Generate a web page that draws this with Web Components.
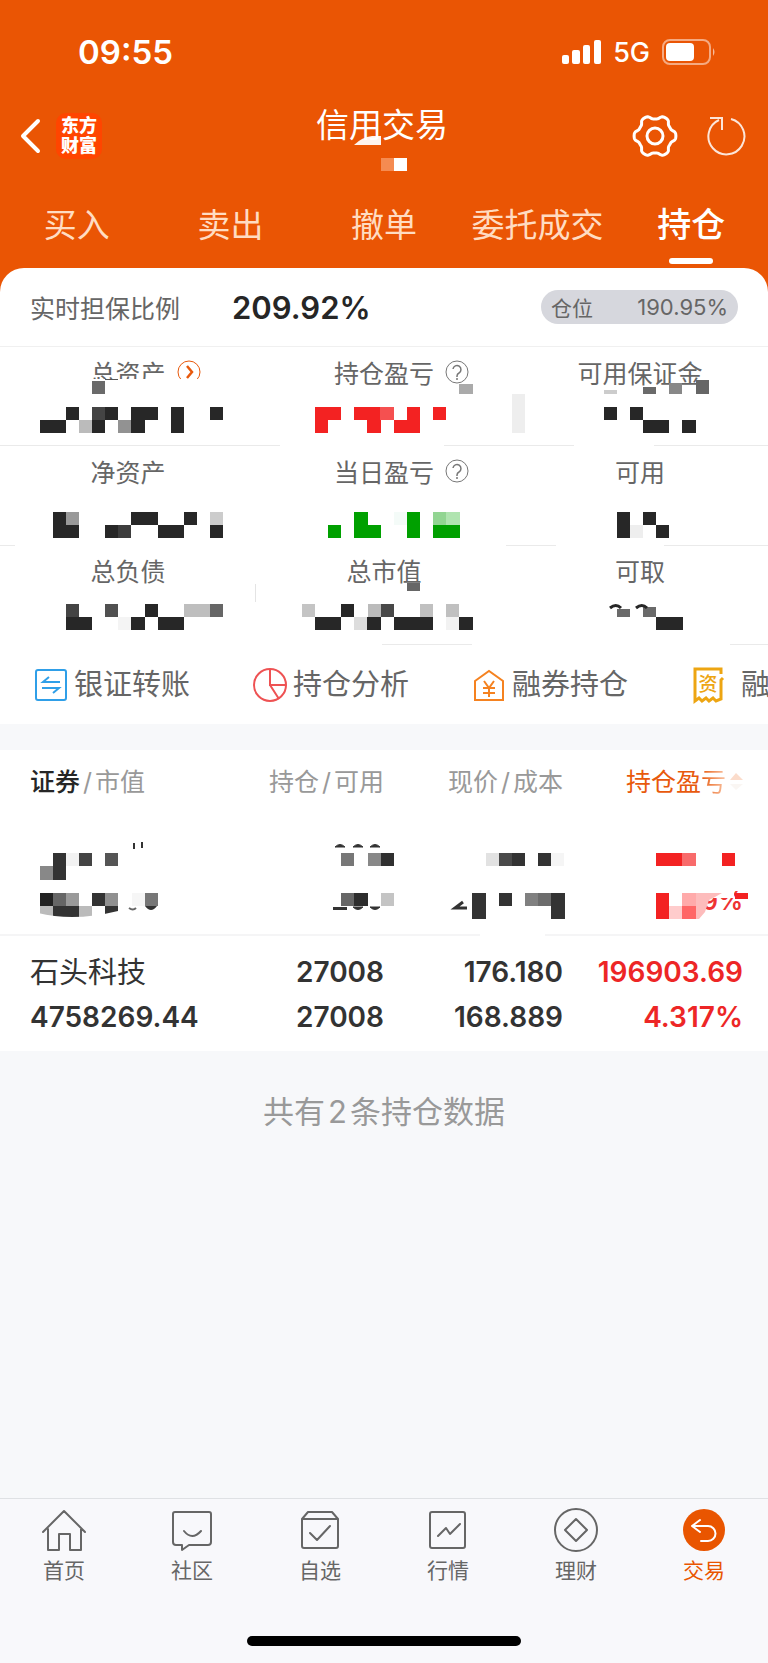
<!DOCTYPE html>
<html lang="zh-CN">
<head>
<meta charset="utf-8">
<meta name="viewport" content="width=device-width, initial-scale=1">
<title>信用交易</title>
<style>
body { margin: 0; background: #f7f8fa; font-family: Inter, "Noto Sans CJK SC", sans-serif; color: #666; }
</style>
</head>
<body>
<credit-app></credit-app>
<script>
const BASE = `:host,*{box-sizing:border-box} a{color:inherit;text-decoration:none} button{font:inherit;color:inherit;background:none;border:0;padding:0;margin:0;display:block;cursor:pointer} svg{display:block}`;
const define = (name, css, html) => customElements.define(name, class extends HTMLElement {
  constructor() {
    super();
    this.attachShadow({ mode: 'open' }).innerHTML = `<style>${BASE}${css}</style>${html}`;
  }
});

/* Redaction blocks: each entry is "x1 x2 y1 y2 colour". */
const D = '#272727', R = '#f32222', G = '#00a000';
const blocks = list => list.trim().split(/\s*;\s*/).filter(Boolean).map(s => {
  const [x1, x2, y1, y2, c] = s.split(' ');
  return `<rect x="${x1}" y="${y1}" width="${x2 - x1}" height="${y2 - y1}" fill="${c}"/>`;
}).join('');

define('status-bar', `
:host{display:flex;align-items:center;height:44px;margin-top:30px;padding:0 52px 0 78px;color:#fff}
time{font-size:33px;font-weight:600;margin-right:auto}
.net{font-size:27px;font-weight:500;margin:0 12px}`, `
<time>09:55</time>
<svg width="39" height="24" fill="#fff"><rect y="15" width="7" height="9" rx="2"/><rect x="10" y="10" width="8" height="14" rx="2"/><rect x="21" y="5" width="7" height="19" rx="2"/><rect x="32" width="7" height="24" rx="2"/></svg>
<span class="net">5G</span>
<svg width="54" height="26" fill="none"><rect x="1" y="1" width="47" height="24" rx="7" stroke="#fff" stroke-opacity=".5" stroke-width="2"/><rect x="4" y="4" width="28" height="18" rx="4" fill="#fff"/><path d="M51 9q3 4 0 8z" fill="#fff" fill-opacity=".6"/></svg>`);

const gear = (() => {
  let d = '';
  for (let i = 0; i < 120; i++) {
    const t = i * Math.PI / 60, r = 19 + 2 * Math.tanh(1.8 * Math.cos(6 * t));
    d += (i ? 'L' : 'M') + (23 + r * Math.cos(t)).toFixed(1) + ' ' + (23 + r * Math.sin(t)).toFixed(1);
  }
  return d + 'Z';
})();

define('nav-bar', `
:host{display:grid;grid-template-columns:1fr auto 1fr;align-items:center;height:124px;padding:0 22px 0 18px;color:#fff}
.left,.right{display:flex;align-items:center}
.left{gap:14px}.right{justify-content:flex-end;gap:28px}
.logo{width:46px;height:46px;border-radius:10px;background:#ff4500;font-size:18px;line-height:20px;font-weight:900;text-align:center;padding-top:3px}
.title{position:relative}
h1{margin:0 0 22px;font-size:33px;line-height:40px;font-weight:400}
.title svg{position:absolute;left:38px;top:29px}`, `
<div class="left"><button aria-label="返回"><svg width="24" height="36" fill="none" stroke="#fff" stroke-width="4" stroke-linecap="round" stroke-linejoin="round"><path d="M20 3 5 18 20 33"/></svg></button><div class="logo">东方<br>财富</div></div>
<div class="title"><h1>信用交易</h1><svg width="56" height="38" viewBox="354 134 56 38"><path d="M354 145q8-8 18-9h9v9z" fill="#fff" opacity=".93"/>${blocks('381 394 158 171 #f58b51;394 407 158 171 #fff')}</svg></div>
<div class="right"><button aria-label="设置"><svg width="46" height="46" fill="none" stroke="#fff" stroke-width="3"><path d="${gear}" stroke-linejoin="round"/><circle cx="23" cy="23" r="8"/></svg></button>
<button aria-label="刷新"><svg width="40" height="46" viewBox="706 113 40 46" fill="none" stroke="#fff" stroke-opacity=".85" stroke-width="2"><path d="M731 119a18 18 0 1 1-12 1M710 118h12v12" /></svg></button></div>`);

define('trade-tabs', `
:host{display:block}
nav{display:grid;grid-template-columns:repeat(5,1fr);height:70px;text-align:center;font-size:33px;line-height:54px;color:#ffdcc2;white-space:nowrap}
a{position:relative}
.on{color:#fff;font-size:34px;font-weight:500}
.on::after{content:"";position:absolute;left:50%;bottom:4px;width:44px;height:6px;margin-left:-22px;border-radius:3px;background:#fff}`, `
<nav><a href="#buy">买入</a><a href="#sell">卖出</a><a href="#cancel">撤单</a><a href="#orders">委托成交</a><a class="on" href="#positions" aria-current="page">持仓</a></nav>`);

define('ratio-row', `
:host{display:flex;align-items:center;height:79px;padding:0 30px;border-bottom:1px solid #f0f0f0}
.k{font-size:25px}
.v{font-size:31px;font-weight:600;color:#262626;margin-left:52px}
.pill{display:flex;justify-content:space-between;align-items:center;margin-left:auto;width:197px;height:34px;border-radius:17px;background:#d6d7dd;padding:0 10px;font-size:21px}
.pill span + span{font-size:22px}`, `
<span class="k">实时担保比例</span><strong class="v">209.92%</strong>
<div class="pill"><span>仓位</span><span>190.95%</span></div>`);

const HELP = `<svg width="24" height="24" fill="none" stroke="#777"><circle cx="12" cy="12" r="11"/><path d="M8 9a4 4 0 1 1 6 4q-2 1-2 3v1M12 18v2" stroke-width="1.5"/></svg>`;
const MORE = `<svg width="24" height="24" fill="none" stroke="#e8590c"><circle cx="12" cy="12" r="11"/><path d="m10 6 5 6-5 6" stroke-width="2.5"/></svg>`;

/* One figure of the account overview: a slotted label and its hidden value. */
customElements.define('account-metric', class extends HTMLElement {
  set art(a) {
    this.shadowRoot.querySelector('.icon').innerHTML = a.icon || '';
    const s = this.shadowRoot.querySelector('.art');
    s.setAttribute('viewBox', a.view); s.innerHTML = a.svg;
  }
  constructor() {
    super();
    this.attachShadow({ mode: 'open' }).innerHTML = `<style>${BASE}
:host{display:block;position:relative;height:99px;padding-top:10px;text-align:center}
.label{position:relative;display:inline-block;font-size:25px;line-height:34px}
.icon{position:absolute;left:100%;top:3px;margin-left:11px}
.art{position:absolute;left:50%;top:0;margin-left:-128px;overflow:visible}
</style><span class="label"><slot></slot><span class="icon"></span></span><svg class="art" width="256" height="99"></svg>`;
  }
});

const METRICS = [
 { t: '总资产', icon: MORE, view: '0 347 256 99', svg: blocks(`86 210 379 388 #fff;105 118 379 380 #555;92 105 381 394 #6a6a6a;
   66 79 407 420 ${D};92 105 407 420 #444;105 118 407 420 ${D};131 158 407 420 ${D};171 184 407 433 ${D};210 223 407 420 ${D};
   40 66 420 433 ${D};79 92 420 433 #bbb;92 105 420 433 ${D};118 131 420 433 #929292;131 145 420 433 ${D};0 280 445 446 #eaeaea`) },
 { t: '持仓盈亏', icon: HELP, view: '256 347 256 99', svg: blocks(`459 473 384 394 #aaa;315 341 407 420 ${R};354 380 407 420 ${R};380 394 407 420 #f55050;407 420 407 420 ${R};433 446 407 420 ${R};
   315 328 420 433 ${R};367 381 420 433 ${R};394 420 420 433 ${R};444 512 445 446 #eaeaea`) },
 { t: '可用保证金', view: '512 347 256 99', svg: blocks(`512 525 394 433 #eee;604 617 390 394 #ccc;643 656 387 394 #6a6a6a;669 682 383 394 #888;696 709 380 394 #666;
   604 617 407 420 ${D};630 643 407 420 ${D};643 669 420 433 ${D};682 696 420 433 ${D};512 574 445 446 #eaeaea;654 768 445 446 #eaeaea`) },
 { t: '净资产', view: '0 446 256 99', svg: blocks(`53 66 512 538 ${D};66 79 512 525 #999;66 79 525 538 ${D};105 118 525 538 ${D};118 131 525 538 #3d3d3d;131 158 512 525 ${D};158 184 525 538 ${D};184 197 512 525 ${D};210 223 512 525 #ccc;210 223 525 538 ${D};0 15 545 546 #eaeaea`) },
 { t: '当日盈亏', icon: HELP, view: '256 446 256 99', svg: blocks(`328 341 525 538 ${G};354 368 512 525 ${G};354 381 525 538 ${G};394 407 512 525 #f4fbf8;407 420 512 538 ${G};433 446 512 525 #92d592;446 460 512 525 #b0e4b0;433 460 525 538 ${G};506 512 545 546 #eaeaea`) },
 { t: '可用', view: '512 446 256 99', svg: blocks(`617 630 512 538 ${D};630 643 525 538 #eee;643 656 512 525 ${D};656 669 525 538 ${D};512 556 545 546 #eaeaea;664 768 545 546 #eaeaea`) },
 { t: '总负债', view: '0 545 256 99', svg: blocks(`66 79 604 617 #444;105 118 604 617 #505050;145 158 604 617 ${D};184 210 604 617 #bebebe;210 223 604 617 #666;
   66 92 617 630 ${D};118 131 617 630 #f4f4f4;131 145 617 630 ${D};158 184 617 630 ${D};255 256 584 602 #e4e4e4`) },
 { t: '总市值', view: '256 545 256 99', svg: blocks(`407 420 583 591 #666;302 315 604 617 #c4c4c4;341 354 604 617 ${D};368 381 604 617 #bbb;381 394 604 617 #484848;420 433 604 617 #c0c0c0;446 459 604 617 #c0c0c0;
   315 341 617 630 ${D};354 367 617 630 #ddd;367 381 617 630 ${D};394 433 617 630 ${D};446 459 617 630 #f2f2f2;459 473 617 630 ${D};382 472 644 645 #eaeaea`) },
 { t: '可取', view: '512 545 256 99', svg: blocks(`617 630 609 617 #6a6a6a;643 656 607 617 #6a6a6a;656 683 617 630 ${D};730 768 644 645 #eaeaea`) +
   `<path d="M610 608q6-5 11 0M636 608q6-5 11 0" fill="none" stroke="${D}" stroke-width="3"/>` }
];
customElements.define('account-grid', class extends HTMLElement {
  constructor() {
    super();
    const root = this.attachShadow({ mode: 'open' });
    root.innerHTML = `<style>${BASE}:host{display:grid;grid-template-columns:repeat(3,1fr)}</style>` +
      METRICS.map(m => `<account-metric>${m.t}</account-metric>`).join('');
    root.querySelectorAll('account-metric').forEach((el, i) => { el.art = METRICS[i]; });
  }
});

define('action-link', `
:host{display:block;flex:none;width:219px}
a{display:flex;align-items:center;gap:var(--gap,6px);font-size:29px;line-height:40px;white-space:nowrap}`,
  `<a href="#action"><slot name="icon"></slot><slot></slot></a>`);

define('quick-actions', `
:host{display:flex;height:80px;padding:21px 0 0 34px;overflow:hidden}
.wide{--gap:16px}`, `
<action-link><svg slot="icon" width="34" height="34" fill="none" stroke="#2f9fe8" stroke-width="2"><rect x="2" y="2" width="30" height="30" rx="2"/><path d="M26 14H9l6-5M8 20h17l-6 5"/></svg>银证转账</action-link>
<action-link><svg slot="icon" width="34" height="34" fill="none" stroke="#ee5253" stroke-width="2"><circle cx="17" cy="17" r="16"/><path d="M17 1v16h16M17 17l9 14"/></svg>持仓分析</action-link>
<action-link><svg slot="icon" width="34" height="34" fill="none" stroke="#f58220" stroke-width="2"><path d="M3 13 17 3l14 10v19H3z"/><path d="m12 13 5 7 5-7M17 20v9M11 20h12M11 25h12"/></svg>融券持仓</action-link>
<action-link class="wide"><svg slot="icon" width="34" height="38" fill="none" stroke="#eda512" stroke-width="3"><path d="M30 8V3H4v32l4-3 3 3 4-3 3 3 4-3 3 3 5-2V14l2-2"/><text x="17" y="25" font-size="19" font-weight="500" text-anchor="middle" fill="#eda512" stroke="none">资</text></svg>融</action-link>`);

define('holdings-table', `
:host{display:block;background:#fff}
table{width:100%;table-layout:fixed;border-collapse:collapse}
.c2,.c3{width:179px}.c4{width:205px}
th,td{padding:0;text-align:right;white-space:nowrap}
th{font-size:25px;font-weight:400;line-height:64px;padding-bottom:6px;color:#999}
th b{font-weight:500;color:#262626}
th i{font-style:normal;margin:0 3px}
th:first-child,td:first-child{text-align:left;padding-left:30px}
th:last-child,td:last-child{padding-right:25px}
.sort{display:inline-flex;align-items:center;gap:4px;color:#e8590c}
.fade{background:linear-gradient(90deg,#e8590c,#f9c5a6);-webkit-background-clip:text;color:transparent}
td svg{display:block;overflow:visible;margin-left:auto}
td:first-child svg{margin-left:0}
.deal td{height:116px;padding-top:15px;padding-bottom:11px;font-size:28px;line-height:45px;font-weight:600;color:#333}
.deal span{display:block}
.deal .name{font-size:29px;font-weight:400}
.deal .up{color:#ed2626}`, `
<table><colgroup><col><col class="c2"><col class="c3"><col class="c4"></colgroup>
<thead><tr><th scope="col"><b>证券</b><i>/</i>市值</th><th scope="col">持仓<i>/</i>可用</th><th scope="col">现价<i>/</i>成本</th>
<th scope="col"><span class="sort"><span>持仓盈<span class="fade">亏</span></span><svg width="13" height="18"><path d="M0 7 6 0l7 7z" fill="#fbdccb"/><path d="M0 11h13l-7 6z" fill="#faf6f3"/></svg></span></th></tr></thead>
<tbody>
<tr>
<td><svg width="180" height="115" viewBox="30 820 180 115">${blocks(`53 66 853 880 #333;40 53 866 880 #888;66 79 853 866 #f2f2f2;79 92 853 866 #444;105 118 853 866 #555;133 135 843 849 #333;141 143 842 848 #333;
40 53 893 906 #222;53 66 893 906 #666;66 79 893 906 #9a9a9a;92 105 893 906 #333;105 118 893 906 #909090;132 145 893 906 #f6f6f6;145 158 893 906 #777;40 53 906 919 #bbb;53 79 906 919 #333;79 92 906 919 #bbb;105 118 906 915 #333;0 480 934 936 #f5f5f6`)}
<path d="M38 913q36 9 80-2l10-4v14H38z" fill="#fff"/><path d="M129 908q4 3 7 0" fill="none" stroke="#666" stroke-width="2"/><path d="M145 906h12q-6 8-12 0z" fill="#333"/></svg></td>
<td><svg width="179" height="115" viewBox="205 820 179 115">${blocks('341 354 853 866 #777;368 381 853 866 #888;381 394 853 866 #303030;341 354 893 906 #666;354 368 893 906 #2d2d2d;381 394 893 906 #c4c4c4;333 347 907 910 #333')}
<path d="M335 847q5-5 10 0zM353 847q5-5 10 0zM370 847q5-5 10 0zM353 907q5 5 10 0zM370 907q5 5 10 0z" fill="#333" stroke="#333"/></svg></td>
<td><svg width="179" height="115" viewBox="384 820 179 115">${blocks('486 499 853 866 #e2e2e2;499 512 853 866 #4a4a4a;512 525 853 866 #333;538 551 853 866 #333;551 564 853 866 #f5f5f5;472 486 893 919 #333;499 512 893 906 #333;525 538 893 906 #808080;538 551 893 906 #6c6c6c;551 565 893 919 #333;545 768 934 936 #f5f5f6')}
<path d="M463 902l-8 6h12" fill="none" stroke="#333" stroke-width="3"/></svg></td>
<td><svg width="180" height="115" viewBox="563 820 180 115"><text x="743" y="910" text-anchor="end" font-size="25" font-weight="600" fill="#e33">9%</text>${blocks(`702 734 888 898 #fff;656 682 853 866 ${R};682 696 853 866 #f86b6b;722 735 853 866 ${R};656 669 893 919 ${R};669 682 906 919 #fcc;682 696 893 906 #faa;682 696 906 919 #f66;735 748 893 899 ${R}`)}
<path d="M696 893h26l-7 4-6 3-4 12-6 7h-3z" fill="#fdbcbc"/></svg></td>
</tr>
<tr class="deal"><td><span class="name">石头科技</span><span>4758269.44</span></td><td><span>27008</span><span>27008</span></td><td><span>176.180</span><span>168.889</span></td><td class="up"><span>196903.69</span><span>4.317%</span></td></tr>
</tbody></table>`);

define('tab-item', `
:host{display:block}
a{display:flex;flex-direction:column;align-items:center;gap:3px;font-size:21px;line-height:30px}`,
  `<a href="#tab"><slot name="icon"></slot><slot></slot></a>`);

define('tab-bar', `
:host{display:flex;flex-direction:column;height:165px;border-top:1px solid #dfe1e4;background:#f8f8fb;margin-top:auto;padding:8px 0 17px}
nav{display:grid;grid-template-columns:repeat(6,1fr)}
.on{color:#e95500}
.home{width:274px;height:10px;border-radius:5px;background:#000;margin:auto auto 0}
svg{fill:none;stroke:#666;stroke-width:2;stroke-linejoin:round;stroke-linecap:round}`, `
<nav>
<tab-item><svg slot="icon" width="44" height="46"><path d="M1 25 22 4l21 21M6 22v21h11V27h11v16h11V22"/></svg>首页</tab-item>
<tab-item><svg slot="icon" width="44" height="46"><path d="M5 5h34q2 0 2 2v28q0 3-3 3H19l-7 5v-5H6q-3 0-3-3V7q0-2 2-2M14 24q8 10 17 0"/></svg>社区</tab-item>
<tab-item><svg slot="icon" width="44" height="46"><path d="M4 12v27q0 2 2 2h32q2 0 2-2V12M4 12l6-7h24l6 7zM12 26l7 7 13-14"/></svg>自选</tab-item>
<tab-item><svg slot="icon" width="44" height="46"><rect x="4" y="5" width="35" height="36" rx="2"/><path d="m12 29 8-8 4 6 10-10"/></svg>行情</tab-item>
<tab-item><svg slot="icon" width="44" height="46"><circle cx="22" cy="23" r="21"/><path d="m22 12 11 11-11 11-11-11z"/></svg>理财</tab-item>
<tab-item class="on"><svg slot="icon" width="44" height="46"><circle cx="22" cy="23" r="21" fill="#e95500" stroke="none"/><path d="M18 13l-8 6 8 6M10 19h16a7 7 0 0 1 0 15h-7" stroke="#fff"/></svg>交易</tab-item>
</nav><div class="home"></div>`);

define('credit-app', `
:host{display:flex;flex-direction:column;min-height:100vh}
header{display:flow-root;background:#ea5504}
.back{background:#ea5504}
section{background:#fff;border-radius:24px 24px 0 0}
holdings-table{margin-top:26px}
.count{margin:0;padding-top:36px;text-align:center;font-size:31px;line-height:50px;color:#999}
.count span{margin:0 3px}`, `
<header><status-bar></status-bar><nav-bar></nav-bar><trade-tabs></trade-tabs></header>
<div class="back"><section><ratio-row></ratio-row><account-grid></account-grid><quick-actions></quick-actions></section></div>
<holdings-table></holdings-table>
<p class="count">共有<span>2</span>条持仓数据</p>
<tab-bar></tab-bar>`);
</script>
</body>
</html>
